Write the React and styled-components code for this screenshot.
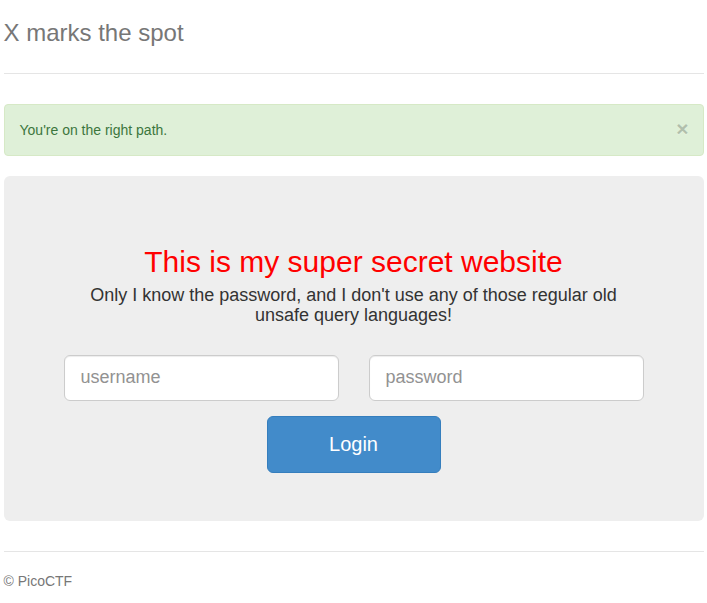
import styled, { createGlobalStyle } from 'styled-components';

const GlobalStyle = createGlobalStyle`
  html, body {
    margin: 0;
    padding: 0;
    background: #fff;
  }
  body {
    font-family: "Liberation Sans", Arial, Helvetica, sans-serif;
    font-size: 14px;
    line-height: 1.42857;
    color: #333;
  }
  * {
    box-sizing: border-box;
  }
`;

const Container = styled.div`
  width: 700px;
  margin: 0 auto;
  padding-top: 13px;
`;

const Header = styled.div`
  padding-bottom: 20px;
  border-bottom: 1px solid #e5e5e5;
`;

const Title = styled.h3`
  margin: 0;
  font-size: 24px;
  font-weight: 500;
  line-height: 40px;
  color: #777;
`;

const Alert = styled.div`
  display: flex;
  align-items: center;
  justify-content: space-between;
  margin: 30px 0 20px;
  padding: 15px 14px 15px 15px;
  border: 1px solid #d6e9c6;
  border-radius: 4px;
  background: #dff0d8;
  color: #3c763d;
  line-height: 20px;
`;

const Close = styled.button`
  margin-top: -3px;
  padding: 0;
  border: 0;
  background: transparent;
  font-family: inherit;
  font-size: 21px;
  font-weight: bold;
  line-height: 1;
  color: #000;
  text-shadow: 0 1px 0 #fff;
  opacity: 0.2;
  cursor: pointer;
`;

const Jumbotron = styled.div`
  padding: 48px 60px;
  border-radius: 6px;
  background: #eee;
  text-align: center;
`;

const Heading = styled.h1`
  margin: 21px 0 8px;
  font-size: 30px;
  font-weight: 500;
  line-height: 1.1;
  color: red;
`;

const Lead = styled.h4`
  margin: 0;
  font-size: 18px;
  font-weight: normal;
  line-height: 1.1;
  color: #333;
`;

const Form = styled.form`
  display: flex;
  flex-direction: column;
  align-items: center;
  gap: 15px;
  margin-top: 29px;
`;

const Fields = styled.div`
  display: grid;
  grid-template-columns: 1fr 1fr;
  gap: 30px;
  width: 100%;
`;

const Input = styled.input`
  display: block;
  width: 100%;
  height: 46px;
  padding: 10px 16px;
  border: 1px solid #ccc;
  border-radius: 6px;
  background: #fff;
  box-shadow: inset 0 1px 1px rgba(0, 0, 0, 0.075);
  font-family: inherit;
  font-size: 18px;
  line-height: 1.33;
  color: #555;
  outline: none;

  &::placeholder {
    color: #929292;
  }
`;

const Button = styled.button`
  width: 174px;
  padding: 14px 16px 15px;
  border: 1px solid #357ebd;
  border-radius: 6px;
  background: #428bca;
  font-family: inherit;
  font-size: 20px;
  line-height: 1.33;
  color: #fff;
  cursor: pointer;
`;

const Footer = styled.footer`
  margin-top: 30px;
  padding-top: 19px;
  border-top: 1px solid #e5e5e5;
  color: #777;
  line-height: 20px;
`;

const App = () => (
  <>
    <GlobalStyle />
    <Container>
      <Header>
        <Title>X marks the spot</Title>
      </Header>

      <Alert>
        <span>You're on the right path.</span>
        <Close type="button" aria-label="Close">×</Close>
      </Alert>

      <Jumbotron>
        <Heading>This is my super secret website</Heading>
        <Lead>
          Only I know the password, and I don't use any of those regular old
          unsafe query languages!
        </Lead>
        <Form onSubmit={(e) => e.preventDefault()}>
          <Fields>
            <Input type="text" name="user" placeholder="username" />
            <Input type="password" name="pass" placeholder="password" />
          </Fields>
          <Button type="submit">Login</Button>
        </Form>
      </Jumbotron>

      <Footer>© PicoCTF</Footer>
    </Container>
  </>
);

export default App;
